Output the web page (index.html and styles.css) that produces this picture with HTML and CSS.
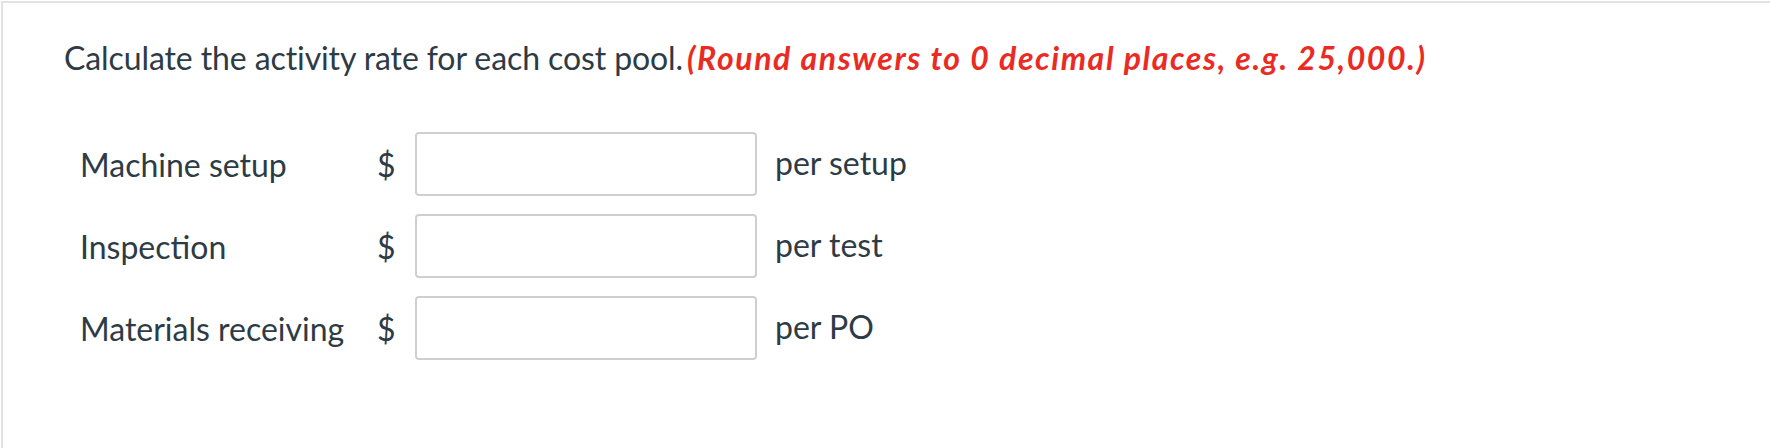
FILE: index.html
```html
<!DOCTYPE html>
<html lang="en">
<head>
<meta charset="utf-8">
<title>Activity rate</title>
<link rel="stylesheet" href="styles.css">
</head>
<body>
<div class="card">
  <p class="question">Calculate the activity rate for each cost pool.<em class="hint">(Round answers to 0 decimal places, e.g. 25,000.)</em></p>
  <div class="grid">
    <div class="label">Machine setup</div>
    <div class="cur">$</div>
    <input class="field" type="text" aria-label="Machine setup">
    <div class="unit">per setup</div>

    <div class="label">Inspection</div>
    <div class="cur">$</div>
    <input class="field" type="text" aria-label="Inspection">
    <div class="unit">per test</div>

    <div class="label">Materials receiving</div>
    <div class="cur">$</div>
    <input class="field" type="text" aria-label="Materials receiving">
    <div class="unit">per PO</div>
  </div>
</div>
</body>
</html>
```
FILE: styles.css
```css
html, body {
  margin: 0;
  padding: 0;
  background: #ffffff;
}
body {
  font-family: Lato, "Open Sans", sans-serif;
  color: #2d3b45;
}
.card {
  margin: 1px 0 0 1px;
  height: 447px;
  box-sizing: border-box;
  border-top: 2px solid #e2e2e2;
  border-left: 2px solid #e2e2e2;
  padding: 35px 0 0 61px;
}
.question {
  margin: 0;
  font-size: 32px;
  line-height: 40px;
  letter-spacing: -0.1px;
}
.hint {
  margin-left: 4px;
  color: #ea2b24;
  font-style: italic;
  font-weight: 700;
  letter-spacing: 1.6px;
}
.grid {
  margin-top: 54px;
  margin-left: 16px;
  display: grid;
  grid-template-columns: 297px 38px 342px auto;
  grid-auto-rows: 64px;
  row-gap: 18px;
  align-items: center;
  font-size: 32px;
}
.field {
  box-sizing: border-box;
  width: 342px;
  height: 64px;
  border: 2px solid #cfcfcf;
  border-radius: 4px;
  background: #fff;
  margin: 0;
}
.unit {
  padding-left: 18px;
  margin-top: -4px;
}
```
